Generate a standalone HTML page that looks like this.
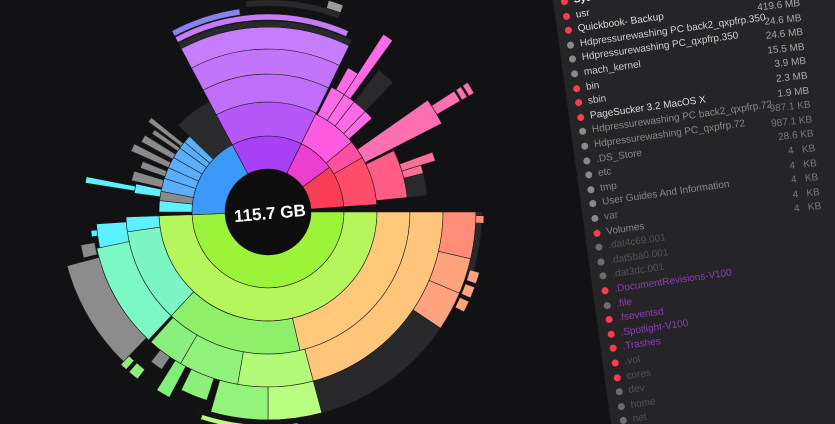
<!DOCTYPE html>
<html><head><meta charset="utf-8">
<style>
html,body{margin:0;padding:0;background:#121214;width:835px;height:424px;overflow:hidden;position:relative;font-family:"Liberation Sans",sans-serif}
#sb{position:absolute;left:0;top:0}
.list{position:absolute;left:565px;top:2px;transform-origin:0 0;transform:rotate(-8deg);}
.row{position:absolute;left:0;height:14px;white-space:nowrap;font-size:10px;line-height:14px}
.row i{position:absolute;left:-4px;top:3px;width:7px;height:7px;border-radius:50%;background:#8a8a8a}
.row i.r{background:#ff3b4e}
.row span{position:absolute;left:9px;top:0}
.nums{position:absolute;left:800px;top:4px;transform-origin:0 0;transform:rotate(-6deg)}
.n{position:absolute;right:0;white-space:nowrap;font-size:10px;line-height:14px;text-align:right}
</style></head><body>
<svg id="sb" width="835" height="424" viewBox="0 0 835 424" xmlns="http://www.w3.org/2000/svg">
<polygon points="553,0 835,0 835,424 611,424" fill="#252527"/>
<g id="segs"></g>
<circle cx="268" cy="212" r="43" fill="#0e0e0f"/>
<text x="270" y="219" fill="#fff" font-family="Liberation Sans,sans-serif" font-size="17" font-weight="bold" text-anchor="middle" transform="rotate(-5 270 214)">115.7 GB</text>
</svg>
<div class="list" id="list"></div>
<div class="nums" id="nums"></div>
<script>
var cx=268,cy=212;
function P(r,a){a=a*Math.PI/180;return (cx+r*Math.sin(a)).toFixed(2)+","+(cy-r*Math.cos(a)).toFixed(2);}
function arc(r0,r1,a0,a1,f){var l=(a1-a0)>180?1:0;
return '<path d="M'+P(r1,a0)+' A'+r1+','+r1+' 0 '+l+' 1 '+P(r1,a1)+' L'+P(r0,a1)+' A'+r0+','+r0+' 0 '+l+' 0 '+P(r0,a0)+' Z" fill="'+f+'" stroke="#1a1a1a" stroke-width="0.6"/>';}
var S=[
[76,125,-46,-28,'#2b2b2d'],
[43,76,-28,26,'#a93ff6'],[43,76,26,54,'#ec3fcf'],[43,76,54,86,'#fb3c55'],[43,76,90,268,'#9cf43a'],[43,76,-92,-28,'#3b99fb'],
[76,110,-28,26,'#b657f8'],[110,138,-28,26,'#c06df9'],[138,163,-28,26,'#c375fa'],[163,185,-28,26,'#c67cfb'],
[185,191,-28,26,'#2a2a2c'],[192,198,-28,24,'#c57bfb'],[199,205,-28,-8,'#8a80f0'],[206,212,-6,20,'#2a2a2c'],[212,220,16,20,'#9a9a9a'],
[76,109,26,50,'#ff5be0'],[76,109,50,60,'#ff4fa0'],[76,109,60,86,'#ff4c6a'],
[109,140,27,33,'#ff6be6'],[109,140,33,38,'#ff6be6'],[109,140,38,44,'#ff6be6'],[109,140,44,48,'#ff6be6'],
[140,212,33,36,'#ff6be6'],[140,180,38,44,'#2a2a2c'],[140,165,29,33,'#ff6be6'],
[109,195,55,63,'#ff70b0'],[195,222,57,60,'#ff70b0'],[224,230,57,60,'#ff70b0'],[232,238,57,60,'#ff70b0'],
[109,140,64,84,'#ff5d85'],[140,175,70,73,'#ff6f9a'],[140,160,76,84,'#2a2a2c'],[140,160,73,76,'#ff6f9a'],
[76,109,-90,-84,'#5ef0ff'],[76,109,-84,-79,'#8a8a8a'],
[76,109,-79,-72,'#5aaefc'],[76,109,-72,-66,'#5aaefc'],[76,109,-66,-60,'#5aaefc'],[76,109,-60,-54,'#5aaefc'],[76,109,-54,-50,'#5aaefc'],[76,109,-50,-46,'#5aaefc'],
[109,135,-82,-78,'#5ef0ff'],[135,185,-81,-79,'#5ef0ff'],[109,140,-77,-73,'#8a8a8a'],[109,135,-71,-68,'#8a8a8a'],[109,150,-66,-63,'#8a8a8a'],[109,145,-61,-58,'#8a8a8a'],[109,140,-56,-54,'#8a8a8a'],[109,150,-53,-51,'#8a8a8a'],
[76,109,90,268,'#b5f65c'],
[109,142,90,167,'#ffc87a'],[142,175,90,165,'#ffc57a'],
[175,208,90,103,'#ff8d78'],[175,208,103,113,'#ffa27e'],[175,208,113,124,'#ffa27e'],[175,208,124,168,'#29292b'],[208,214,90,108,'#2a2a2c'],
[208,216,91,93,'#ff8d78'],[210,220,106,109,'#ffa27e'],[210,220,110,113,'#ffa27e'],[210,220,114,117,'#ffa27e'],
[109,142,167,223,'#8ef06a'],[142,175,165,190,'#b2fa78'],[142,175,190,210,'#90f27a'],[142,175,210,222,'#88f07c'],
[175,208,165,180,'#b8fc80'],[175,208,180,196,'#92f47a'],[208,213,165,200,'#141414'],[213,218,172,198,'#b8fc80'],
[175,198,198,206,'#8ef07a'],[175,210,208,212,'#7ef07a'],[175,190,214,218,'#8a8a8a'],
[109,142,223,262,'#7bf6c4'],[142,175,223,258,'#7cf7c6'],[175,208,224,255,'#8c8c8c'],
[142,172,258,266,'#5ef0ff'],[172,178,262,264,'#5ef0ff'],[109,142,262,268,'#5ef0ff'],[176,190,256,260,'#8a8a8a'],
[200,212,218,221,'#8ef07a'],[200,212,222,224,'#8ef07a']
];
var h='';for(var i=0;i<S.length;i++)h+=arc.apply(null,S[i]);
document.getElementById('segs').innerHTML=h;
var L=[['System','r','#fff',1],['usr','r','#ddd'],['Quickbook- Backup','r','#ddd'],['Hdpressurewashing PC back2_qxpfrp.350','g','#d0d0d0'],['Hdpressurewashing PC_qxpfrp.350','g','#d0d0d0'],['mach_kernel','g','#ccc'],['bin','r','#ccc'],['sbin','r','#ccc'],['PageSucker 3.2 MacOS X','r','#ddd'],['Hdpressurewashing PC back2_qxpfrp.72','g','#8a8a8a'],['Hdpressurewashing PC_qxpfrp.72','g','#8a8a8a'],['.DS_Store','g','#8a8a8a'],['etc','g','#8a8a8a'],['tmp','g','#8a8a8a'],['User Guides And Information','g','#8a8a8a'],['var','g','#7a7a7a'],['Volumes','r','#888'],['.dat4c69.001','g','#555'],['.dat5ba0.001','g','#555'],['.dat3dc.001','g','#555'],['.DocumentRevisions-V100','r','#8e3cb8'],['.file','g','#8e3cb8'],['.fseventsd','r','#8e3cb8'],['.Spotlight-V100','r','#8e3cb8'],['.Trashes','r','#8e3cb8'],['.vol','r','#555'],['cores','r','#555'],['dev','g','#555'],['home','g','#555'],['net','g','#555']];
var lh='';for(i=0;i<L.length;i++){var d=L[i];var dc=d[1]=='r'?'r':'';var op=i>16&&d[1]=='g'?'opacity:.7':'';
lh+='<div class="row" style="top:'+(i*14.6-7)+'px"><i class="'+dc+'" style="'+op+'"></i><span style="color:'+d[2]+(d[3]?';font-weight:bold':'')+'">'+d[0]+'</span></div>';}
document.getElementById('list').innerHTML=lh;
var N=['419.6 MB','24.6 MB','24.6 MB','15.5 MB','3.9 MB','2.3 MB','1.9 MB','987.1 KB','987.1 KB','28.6 KB','4 &nbsp; KB','4 &nbsp; KB','4 &nbsp; KB','4 &nbsp; KB','4 &nbsp; KB'];
var nh='';for(i=0;i<29;i++){var t=i<N.length?N[i]:'0';var c=i<7?'#aaa':(i<15?'#7a7a7a':'#444');var rt=i<N.length?0:-18;
nh+='<div class="n" style="top:'+(i*14.6-7)+'px;right:'+rt+'px;color:'+c+'">'+t+'</div>';}
document.getElementById('nums').innerHTML=nh;
</script>
</body></html>
